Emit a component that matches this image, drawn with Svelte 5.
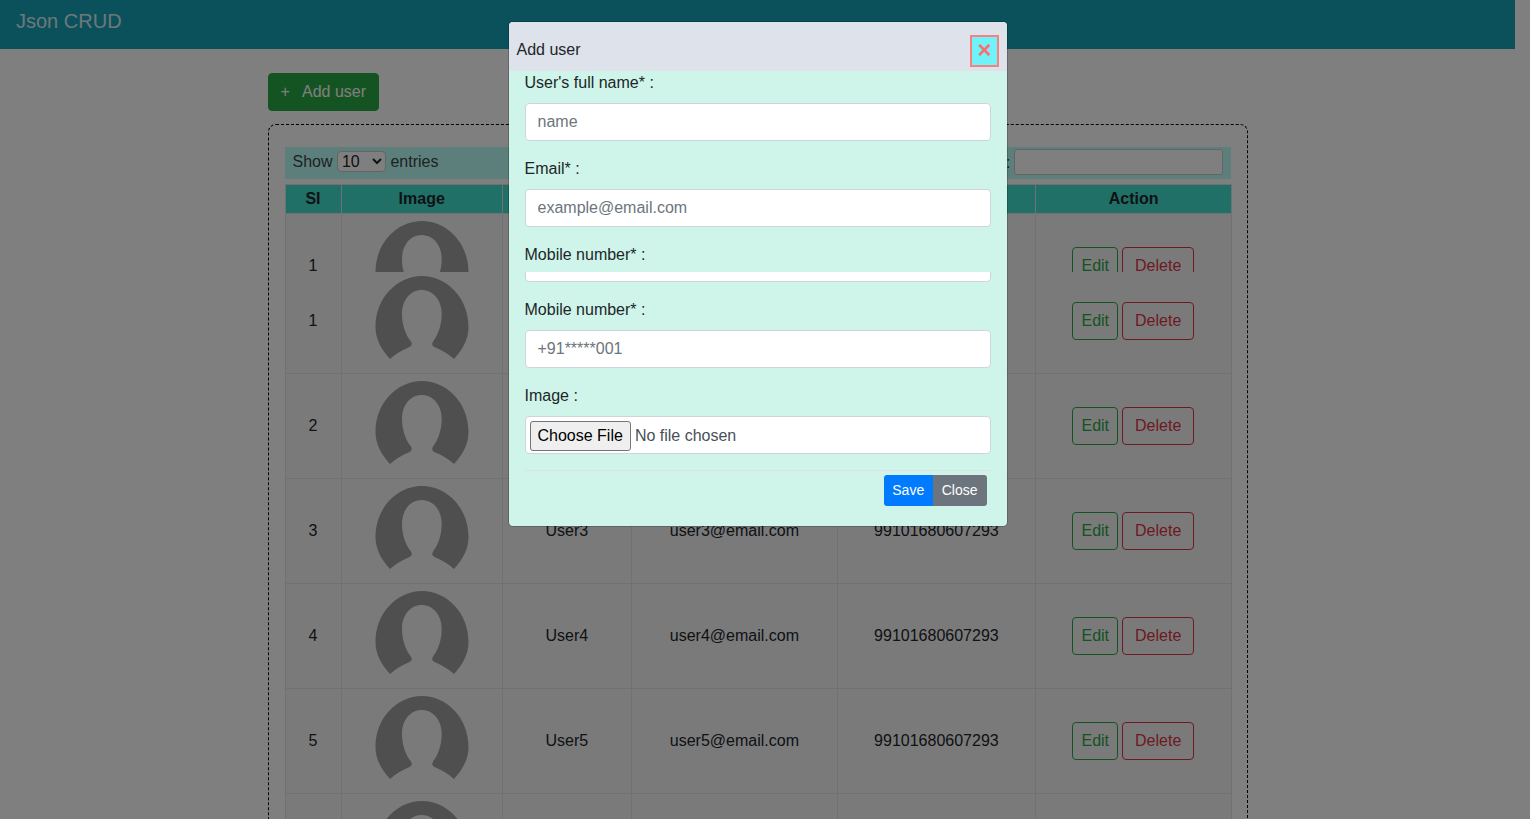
<script>
  const rows = [1, 2, 3, 4, 5, 6, 7];
</script>

{#snippet page()}
  <div class="page">
    <nav class="nav"><span class="brand">Json CRUD</span></nav>
    <main class="container">
      <button class="add"><span class="plus">+</span>Add user</button>
      <section class="box">
        <div class="bar">
          <label class="show">Show
            <select><option>10</option><option>25</option></select>
            entries</label>
          <label class="search">Search:<input type="search" /></label>
        </div>
        <table>
          <colgroup>
            <col class="c1" /><col class="c2" /><col class="c3" />
            <col class="c4" /><col class="c5" /><col class="c6" />
          </colgroup>
          <thead>
            <tr><th>SI</th><th>Image</th><th>Name</th><th>Email</th><th>Mobile</th><th>Action</th></tr>
          </thead>
          <tbody>
            {#each rows as n}
              <tr>
                <td>{n}</td>
                <td>
                  <svg class="avatar" viewBox="0 0 94 84" width="94" height="84" aria-hidden="true">
                    <path d="M15 83C6 73 .5 63 .5 51 .5 22 22 0 47 0s46.5 22 46.5 51c0 12-5.500 22-14.500 32-5-4.500-11-8.500-18.500-11.500-3.500-1.500-4-3.500-2.300-6.300C63 59 66.700 49 66.700 38 66.700 24 58 14 46.700 14S27 24 27 38c0 11 3.700 21 8.800 27.200 1.700 2.800 1.200 4.800-2.300 6.300C26 74.500 20 78.500 15 83Z" />
                  </svg>
                </td>
                <td>User{n}</td>
                <td>user{n}@email.com</td>
                <td>99101680607293</td>
                <td><div class="actions"><button class="edit">Edit</button><button class="del">Delete</button></div></td>
              </tr>
            {/each}
          </tbody>
        </table>
      </section>
    </main>

    <div class="scrim">
      <div class="modal">
        <header class="mhead">
          <span class="mtitle">Add user</span>
          <button class="close" aria-label="Close">×</button>
        </header>
        <form class="mbody">
          <label for="f1">User's full name* :</label>
          <input placeholder="name" />
          <label for="f2">Email* :</label>
          <input placeholder="example@email.com" />
          <label for="f3">Mobile number* :</label>
          <input placeholder="+91*****001" />
          <label for="f4">Image :</label>
          <input class="file" type="file" />
          <footer class="mfoot">
            <button type="button" class="save">Save</button><button type="button" class="dismiss">Close</button>
          </footer>
        </form>
      </div>
    </div>
  </div>
{/snippet}

<div class="pane top">{@render page()}</div>
<div class="pane bottom">{@render page()}</div>

<style>
  :global(body) {
    margin: 0;
    overflow: hidden;
    background: #fff;
  }
  .pane {
    position: relative;
    overflow: hidden;
    width: 1530px;
  }
  .top { height: 272px; }
  .bottom { height: 547px; }
  .bottom .page { margin-top: -217px; }
  .page {
    position: relative;
    width: 1515px;
    padding-right: 15px;
    height: 1100px;
    font: 16px/24px "Liberation Sans", Arial, sans-serif;
    color: #212529;
  }
  .nav {
    height: 49px;
    background: #17a2b8;
    box-sizing: border-box;
    padding: 4px 16px;
  }
  .brand { font-size: 20px; line-height: 34px; color: rgba(255, 255, 255, 0.85); }
  .container {
    width: 980px;
    margin: 24px auto 0;
  }
  button { font: inherit; cursor: pointer; }
  .add {
    display: block;
    height: 38px;
    width: 111px;
    padding: 0 11px;
    text-align: left;
    white-space: nowrap;
    border: 1px solid #28a745;
    border-radius: 4px;
    background: #28a745;
    color: #fff;
  }
  .plus { display: inline-block; width: 22.5px; padding-left: 1px; box-sizing: border-box; }
  .box {
    margin-top: 13px;
    border: 1px dashed #000;
    border-radius: 8px;
    padding: 22px 16px 16px;
  }
  .bar {
    display: flex;
    justify-content: space-between;
    align-items: center;
    height: 32px;
    padding: 0 8px;
    background: #b8fff7;
    font-size: 16px;
    color: #3d4448;
  }
  .show { display: flex; align-items: center; gap: 4.45px; margin-top: -2px; }
  select {
    width: 49px;
    height: 21px;
    font: 16px "Liberation Sans", Arial, sans-serif;
    color: #212529;
    background: #fff;
    border: 1px solid #c4c8cc;
    border-radius: 4px;
    padding: 0 0 2px;
    margin-top: -1px;
  }
  .search { display: flex; align-items: center; gap: 3px; }
  .search input {
    width: 209px;
    height: 26px;
    box-sizing: border-box;
    border: 1px solid #c4c8cc;
    border-radius: 3px;
    background: #fff;
    margin-top: -2px;
  }
  table {
    width: 947px;
    margin-top: 5px;
    table-layout: fixed;
    border-collapse: collapse;
    background: #f5f5f5;
  }
  .c1 { width: 56px; }
  .c2 { width: 161.4px; }
  .c3 { width: 129px; }
  .c4 { width: 206px; }
  .c5 { width: 198px; }
  .c6 { width: 196.6px; }
  th, td {
    border: 1px solid #dee2e6;
    padding: 0;
    text-align: center;
    vertical-align: middle;
  }
  th {
    height: 28px;
    background: #40e0d0;
    font-weight: 700;
  }
  td { height: 104px; }
  .avatar {
    display: block;
    margin: -6px auto 0;
    fill: #9f9f9f;
  }
  .actions { display: flex; justify-content: center; gap: 4px; padding-right: 0.6px; }
  .actions button {
    height: 38px;
    background: transparent;
    border-radius: 4px;
    border: 1px solid;
  }
  .edit { padding: 0 8px; color: #28a745; border-color: #28a745 !important; }
  .del { padding: 0 12px; color: #dc3545; border-color: #dc3545 !important; }
  .scrim {
    position: absolute;
    inset: 0;
    width: 1530px;
    background: rgba(0, 0, 0, 0.5);
  }
  .modal {
    box-sizing: border-box;
    width: 500px;
    margin: 21px 0 0 507.5px;
    border: 1px solid rgba(0, 0, 0, 0.2);
    border-radius: 5px;
    background: #cff5ea;
    background-clip: padding-box;
    overflow: hidden;
  }
  .mhead {
    display: flex;
    justify-content: space-between;
    align-items: flex-start;
    height: 49px;
    box-sizing: border-box;
    padding: 13px 8px 0;
    background: #dee2ea;
  }
  .mtitle { margin-top: 3px; }
  .close {
    width: 29px;
    height: 32px;
    box-sizing: border-box;
    padding: 0 0 2px 1px;
    background: #6ff3f8;
    border: 2px solid #f88080;
    color: #f87171;
    font: 700 24px/1 "Liberation Sans", Arial, sans-serif;
  }
  .mbody {
    display: flex;
    flex-direction: column;
    padding: 0 16px 20px;
  }
  .mbody label { display: block; margin-bottom: 8px; }
  .mbody input {
    box-sizing: border-box;
    height: 38px;
    width: 100%;
    margin-bottom: 16px;
    padding: 6px 12px;
    border: 1px solid #ced4da;
    border-radius: 4px;
    background: #fff;
    font: inherit;
    color: #495057;
  }
  .mbody input::placeholder { color: #6c757d; opacity: 1; }
  .mbody input.file { padding: 4px; }
  .mbody input.file::file-selector-button {
    height: 30px;
    padding: 1px 7px;
    border: 1px solid #767676;
    border-radius: 3px;
    background: #efefef;
    color: #000;
  }
  .mfoot {
    display: flex;
    justify-content: flex-end;
    padding: 4px 4px 0;
    border-top: 1px solid #dee2e6;
  }
  .mfoot button {
    height: 31px;
    padding: 0 9px 2px;
    border: 0;
    color: #fff;
    font-size: 14px;
  }
  .mfoot .save { padding: 0 8.5px 2px; background: #007bff; border-radius: 3px 0 0 3px; }
  .dismiss { background: #6c757d; border-radius: 0 3px 3px 0; }
</style>
